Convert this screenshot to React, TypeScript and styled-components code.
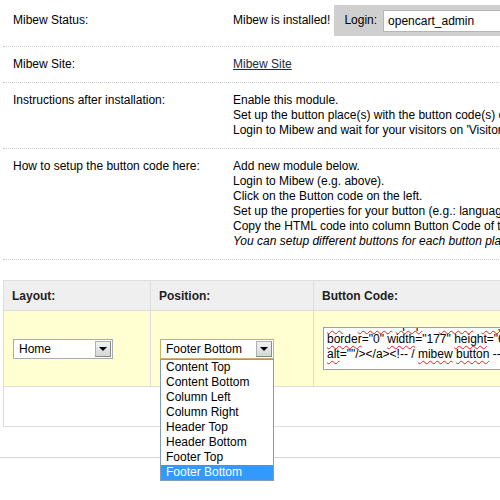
import styled, { createGlobalStyle } from "styled-components";

const GlobalStyle = createGlobalStyle`
    html {
        overflow: hidden;
    }
    body {
        margin: 0;
        padding: 0;
        background: #fff;
        font-family: "Liberation Sans", Arial, sans-serif;
        font-size: 12px;
        color: #000;
    }
`;

const positions = [
    "Content Top",
    "Content Bottom",
    "Column Left",
    "Column Right",
    "Header Top",
    "Header Bottom",
    "Footer Top",
    "Footer Bottom",
];

export default function App() {
    return (
        <>
            <GlobalStyle />
            <Page>
                <Content>
                    <InfoRow $pad="5px 0 10px">
                        <Label>Mibew Status:</Label>
                        <Value>
                            <span>Mibew is installed!</span>
                            <LoginBox>
                                Login:
                                <LoginInput>opencart_admin</LoginInput>
                            </LoginBox>
                        </Value>
                    </InfoRow>
                    <InfoRow>
                        <Label>Mibew Site:</Label>
                        <Value>
                            <Link href="#">Mibew Site</Link>
                        </Value>
                    </InfoRow>
                    <InfoRow>
                        <Label>Instructions after installation:</Label>
                        <Lines>
                            <div>Enable this module.</div>
                            <div>Set up the button place(s) with the button code(s) on the left.</div>
                            <div>Login to Mibew and wait for your visitors on 'Visitors' page.</div>
                        </Lines>
                    </InfoRow>
                    <InfoRow>
                        <Label>How to setup the button code here:</Label>
                        <Lines>
                            <div>Add new module below.</div>
                            <div>Login to Mibew (e.g. above).</div>
                            <div>Click on the Button code on the left.</div>
                            <div>Set up the properties for your button (e.g.: language, style).</div>
                            <div>Copy the HTML code into column Button Code of the module.</div>
                            <em>You can setup different buttons for each button place.</em>
                        </Lines>
                    </InfoRow>

                    <ModuleTable>
                        <Row>
                            <HeadCell>Layout:</HeadCell>
                            <HeadCell>Position:</HeadCell>
                            <HeadCell>Button Code:</HeadCell>
                        </Row>
                        <Row>
                            <BodyCell>
                                <Select $width={100}>
                                    <SelectText>Home</SelectText>
                                    <ArrowBox />
                                </Select>
                            </BodyCell>
                            <BodyCell>
                                <SelectWrap>
                                    <Select $width={114} $focused>
                                        <SelectText>Footer Bottom</SelectText>
                                        <ArrowBox />
                                    </Select>
                                    <DropList>
                                        {positions.map((p) => (
                                            <DropItem key={p} $active={p === "Footer Bottom"}>
                                                {p}
                                            </DropItem>
                                        ))}
                                    </DropList>
                                </SelectWrap>
                            </BodyCell>
                            <BodyCell>
                                <CodeArea>
                                    <CodeInner>
                                        <div>
                                            <Typo>src</Typo>="/<Typo>mibew</Typo>/<Typo>bphp</Typo>?i=<Typo>mibew</Typo>&amp;<Typo>lang</Typo>=en"
                                        </div>
                                        <div>
                                            <Typo>border</Typo>="0" <Typo>width</Typo>="177" <Typo>height</Typo>="61"
                                        </div>
                                        <div>
                                            <Typo>alt</Typo>=""/&gt;&lt;/a&gt;&lt;!-- / <Typo>mibew</Typo> <Typo>button</Typo> --&gt;
                                        </div>
                                    </CodeInner>
                                </CodeArea>
                            </BodyCell>
                        </Row>
                        <FootRow />
                    </ModuleTable>
                </Content>
                <Rule />
            </Page>
        </>
    );
}

const Page = styled.div`
    width: 100%;
    min-height: 500px;
`;

const Content = styled.div`
    width: 640px;
    padding-left: 3px;
`;

const InfoRow = styled.div<{ $pad?: string }>`
    display: grid;
    grid-template-columns: 230px 1fr;
    align-items: start;
    padding: ${(p) => p.$pad || "10px 0"};
    border-bottom: 1px dotted #c8c8c8;
    line-height: 15px;

    &:first-child {
        align-items: center;
    }
`;

const Label = styled.div`
    padding-left: 10px;
`;

const Value = styled.div`
    display: flex;
    align-items: center;
    gap: 4px;
`;

const Lines = styled.div`
    display: flex;
    flex-direction: column;

    em {
        font-style: italic;
    }
`;

const Link = styled.a`
    color: #1b2b3c;
    text-decoration: underline;
`;

const LoginBox = styled.div`
    display: flex;
    align-items: center;
    gap: 6px;
    height: 31px;
    padding: 0 10px;
    background: #cfcfcf;
    flex: 1;
`;

const LoginInput = styled.div`
    box-sizing: border-box;
    width: 200px;
    height: 22px;
    line-height: 20px;
    padding: 0 4px;
    background: #fff;
    border: 1px solid #b5b5b5;
`;

const ModuleTable = styled.div`
    margin-top: 20px;
    border-top: 1px solid #dddddd;
    border-left: 1px solid #dddddd;
`;

const Row = styled.div`
    display: grid;
    grid-template-columns: 147px 163px 1fr;
`;

const HeadCell = styled.div`
    display: flex;
    align-items: center;
    height: 29px;
    padding-left: 8px;
    background: #efefef;
    font-weight: bold;
    color: #222;
    border-right: 1px solid #dddddd;
    border-bottom: 1px solid #dddddd;
`;

const BodyCell = styled.div`
    display: flex;
    align-items: center;
    height: 75px;
    padding-left: 9px;
    background: #ffffd2;
    border-right: 1px solid #dddddd;
    border-bottom: 1px solid #dddddd;
    min-width: 0;
`;

const FootRow = styled.div`
    height: 39px;
    border-bottom: 1px solid #dddddd;
`;

const SelectWrap = styled.div`
    position: relative;
`;

const Select = styled.div<{ $width: number; $focused?: boolean }>`
    box-sizing: border-box;
    display: flex;
    align-items: center;
    width: ${(p) => p.$width}px;
    height: 20px;
    background: #fff;
    border: 1px solid ${(p) => (p.$focused ? "#c9b36a" : "#a5acb2")};
`;

const SelectText = styled.span`
    flex: 1;
    padding-left: 5px;
    line-height: 18px;
`;

const ArrowBox = styled.span`
    box-sizing: border-box;
    position: relative;
    width: 16px;
    height: 16px;
    margin-right: 1px;
    border: 1px solid #8a8a8a;
    border-top-color: #b0b0b0;
    border-left-color: #b0b0b0;
    background: linear-gradient(#f2f2f2, #d6d6d6);

    &::after {
        content: "";
        position: absolute;
        left: 3px;
        top: 5px;
        border-left: 4px solid transparent;
        border-right: 4px solid transparent;
        border-top: 4px solid #000;
    }
`;

const DropList = styled.div`
    position: absolute;
    top: 20px;
    left: 0;
    width: 114px;
    box-sizing: border-box;
    background: #fff;
    border: 1px solid #7f9db9;
    z-index: 2;
`;

const DropItem = styled.div<{ $active?: boolean }>`
    height: 15px;
    line-height: 15px;
    padding-left: 5px;
    white-space: nowrap;
    background: ${(p) => (p.$active ? "#3399ff" : "#fff")};
    color: ${(p) => (p.$active ? "#fff" : "#000")};
`;

const CodeArea = styled.div`
    box-sizing: border-box;
    width: 300px;
    height: 43px;
    border: 1px solid #a0a0a0;
    background: #fff;
    overflow: hidden;
    padding: 0 3px;
`;

const CodeInner = styled.div`
    margin-top: -11px;
    line-height: 15px;
    white-space: nowrap;
`;

const Typo = styled.span`
    text-decoration: underline wavy #e02020;
    text-decoration-thickness: 1px;
    text-underline-offset: 2px;
`;

const Rule = styled.div`
    margin-top: 30px;
    border-top: 1px solid #d4d4d4;
`;
